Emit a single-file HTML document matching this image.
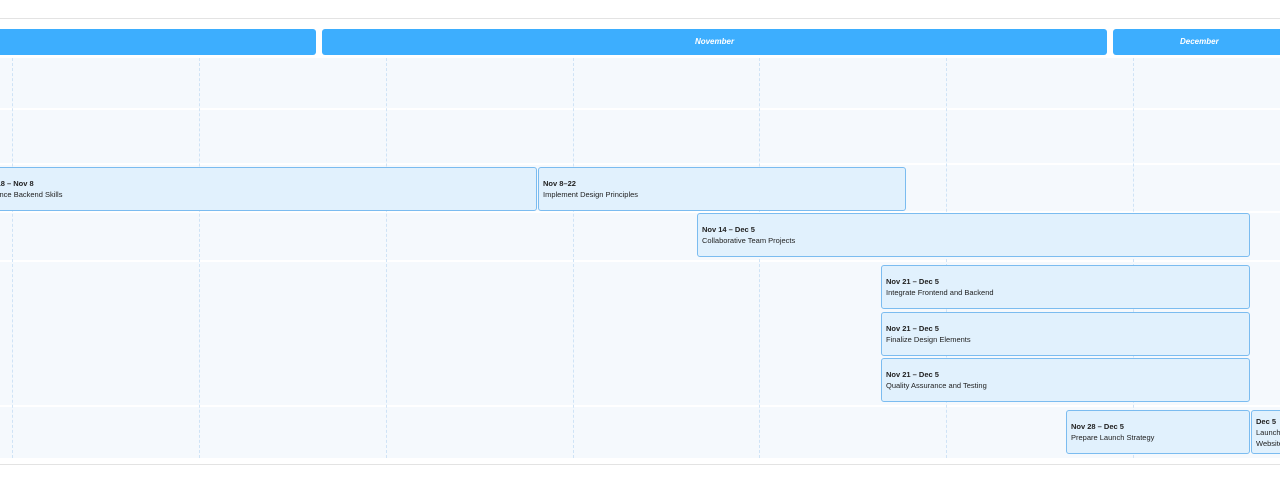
<!DOCTYPE html><html><head><style>
body{margin:0;width:1280px;height:482px;background:#fff;position:relative;overflow:hidden;font-family:"Liberation Sans",sans-serif}
.ab{position:absolute}
.m{position:absolute;top:29px;height:26px;background:#3daefe;border-radius:3px;color:#fff;font-size:8px;font-style:italic;font-weight:bold;text-align:center;line-height:26px}
.v{position:absolute;top:58px;height:400px;border-left:1px dashed #cfe3f6}
.h{position:absolute;left:0;width:1280px;height:2px;background:#fff}
.t{position:absolute;background:#e1f1fd;border:1px solid #7bbcf0;border-radius:3px;box-sizing:border-box;height:44px;padding:10px 0 0 4px;font-size:7.5px;color:#222;line-height:11px;white-space:nowrap;overflow:hidden}
.t b{display:block;font-size:7.5px}
</style></head><body>
<div class="ab" style="left:0;top:18px;width:1280px;height:1px;background:#e3e3e3"></div>
<div class="m" style="left:-10px;width:326px"></div>
<div class="m" style="left:322px;width:785px">November</div>
<div class="m" style="left:1113px;width:180px;text-align:left;padding-left:67px;box-sizing:border-box">December</div>
<div class="ab" style="left:0;top:58px;width:1280px;height:400px;background:#f5f9fd"></div>
<div class="h" style="top:108px"></div><div class="h" style="top:163px"></div><div class="h" style="top:211px"></div><div class="h" style="top:260px"></div><div class="h" style="top:405px"></div>
<div class="v" style="left:12px"></div><div class="v" style="left:199px"></div><div class="v" style="left:386px"></div><div class="v" style="left:573px"></div><div class="v" style="left:759px"></div><div class="v" style="left:946px"></div><div class="v" style="left:1133px"></div>
<div class="ab" style="left:0;top:464px;width:1280px;height:1px;background:#e3e3e3"></div>
<div class="t" style="left:-23px;top:167px;width:560px"><b>Oct 18 – Nov 8</b>Enhance Backend Skills</div>
<div class="t" style="left:538px;top:167px;width:368px"><b>Nov 8–22</b>Implement Design Principles</div>
<div class="t" style="left:697px;top:213px;width:553px"><b>Nov 14 – Dec 5</b>Collaborative Team Projects</div>
<div class="t" style="left:881px;top:265px;width:369px"><b>Nov 21 – Dec 5</b>Integrate Frontend and Backend</div>
<div class="t" style="left:881px;top:312px;width:369px"><b>Nov 21 – Dec 5</b>Finalize Design Elements</div>
<div class="t" style="left:881px;top:358px;width:369px"><b>Nov 21 – Dec 5</b>Quality Assurance and Testing</div>
<div class="t" style="left:1066px;top:410px;width:184px"><b>Nov 28 – Dec 5</b>Prepare Launch Strategy</div>
<div class="t" style="left:1251px;top:410px;width:50px;padding-top:5px"><b>Dec 5</b>Launch<br>Website</div>
</body></html>
